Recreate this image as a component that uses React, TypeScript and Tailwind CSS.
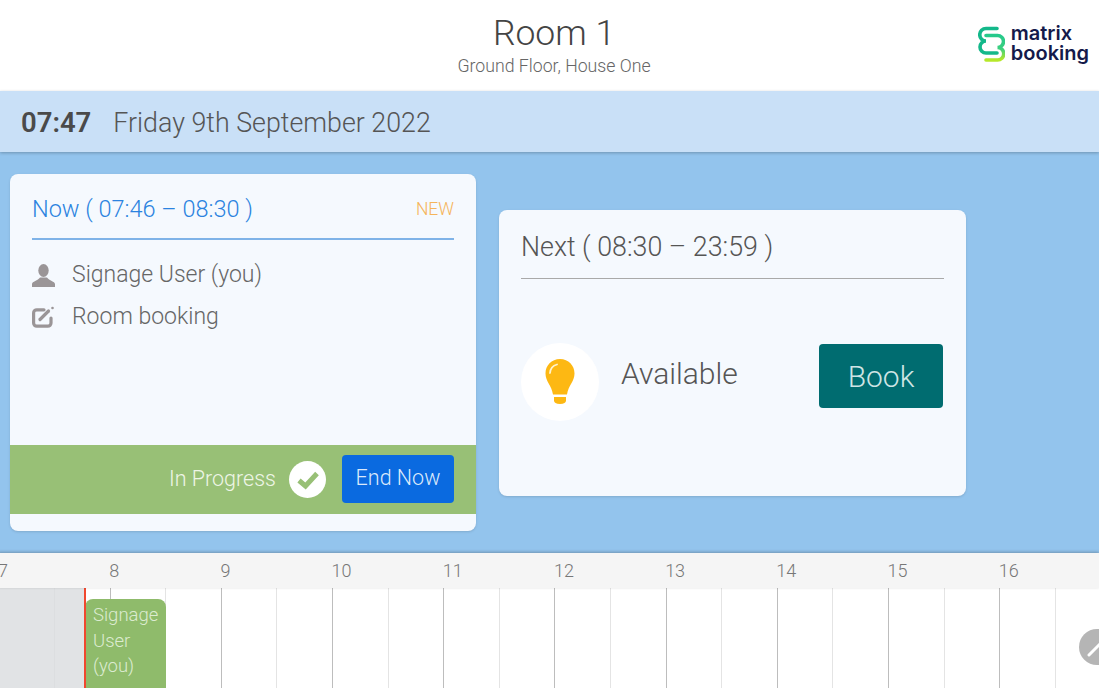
const hours = [7, 8, 9, 10, 11, 12, 13, 14, 15, 16];
const cells = Array.from({ length: 20 }, (_, i) => i);

function Logo() {
  return (
    <div className="flex items-center gap-[6px] pb-[2px]">
      <svg width="27" height="37" viewBox="0 0 27 37" fill="none" strokeWidth="3.6" strokeLinecap="round">
        <defs>
          <linearGradient id="logoRight" gradientUnits="userSpaceOnUse" x1="0" y1="9" x2="0" y2="34">
            <stop offset="0" stopColor="#25c98c" />
            <stop offset="0.55" stopColor="#3bd07f" />
            <stop offset="1" stopColor="#b6e82a" />
          </linearGradient>
        </defs>
        <path d="M8 9.500H19.500a6 6 0 0 1 0 12 6.250 6.250 0 0 1 0 12.500H8" stroke="url(#logoRight)" />
        <path d="M19 2.500H8a6.250 6.250 0 0 0 0 12.500 6 6 0 0 0 0 12H19" stroke="#13b88a" />
      </svg>
      <div className="-mt-[3px] font-['Inter',sans-serif] text-[20px] font-semibold leading-[20px] text-[#141a4a]">
        <div>matrix</div>
        <div>booking</div>
      </div>
    </div>
  );
}

function Bulb() {
  return (
    <svg width="32" height="48" viewBox="0 0 32 48">
      <path
        d="M16 1C7.500 1 1.500 7.500 1.500 15.500c0 8 6 11.500 7.500 21h14c1.500-9.500 7.500-13 7.500-21C30.500 7.500 24.500 1 16 1z"
        fill="#fdb813"
      />
      <path d="M10 39h12v3.500c0 2-2 3.500-6 3.500s-6-1.500-6-3.500z" fill="#fdb813" />
      <path d="M6 15c.3-4 3-7.500 7-8.500" stroke="#fff3cf" strokeWidth="1.800" fill="none" strokeLinecap="round" />
    </svg>
  );
}

function PersonIcon() {
  return (
    <svg width="23" height="23" viewBox="0 0 23 23" fill="#9a9597" className="shrink-0">
      <ellipse cx="11.500" cy="6.500" rx="5.200" ry="6.500" />
      <path d="M0 23v-3c0-2.500 6-3.500 8-6.500h7c2 3 8 4 8 6.500v3z" />
    </svg>
  );
}

function NoteIcon() {
  return (
    <svg width="23" height="22" viewBox="0 0 23 22" fill="none" stroke="#9a9597" strokeLinecap="round" className="shrink-0">
      <path d="M19 12v5a3.200 3.200 0 0 1-3.200 3.200H4.800A3.200 3.200 0 0 1 1.600 17V7a3.200 3.200 0 0 1 3.200-3.200H12" strokeWidth="3.200" />
      <path d="M8 13.500 L16.500 5" strokeWidth="3.200" />
      <circle cx="20.500" cy="2" r="1.300" fill="#9a9597" stroke="none" />
    </svg>
  );
}

function CheckIcon() {
  return (
    <svg width="24" height="20" viewBox="0 0 24 20" fill="none" stroke="#98c076" strokeWidth="5">
      <path d="M3 10.500 L9.500 16 L21 3.500" />
    </svg>
  );
}

export default function App() {
  return (
    <div className="relative flex h-[688px] w-[1099px] flex-col overflow-hidden bg-white font-['Roboto',sans-serif] font-light text-[#4a4a4a]">
      <header className="flex h-[91px] shrink-0 items-center justify-between pl-[457px] pr-[10px]">
        <div className="flex w-[194px] flex-col items-center whitespace-nowrap pb-[2px]">
          <div className="text-[35.500px] leading-[40px] text-[#444]">Room 1</div>
          <div className="mt-[3px] text-[17.700px] leading-[20px] text-[#666]">Ground Floor, House One</div>
        </div>
        <Logo />
      </header>

      <div className="z-10 flex h-[61px] shrink-0 items-center bg-[#c9e0f7] pl-[21px] pt-[3px] shadow-[0_1px_3px_rgba(0,0,0,0.25)]">
        <span className="text-[27.500px] font-semibold text-[#4a4a4a]">07:47</span>
        <span className="ml-[22px] text-[26.800px] text-[#555]">Friday 9th September 2022</span>
      </div>

      <main className="flex h-[401px] shrink-0 items-center gap-[23px] bg-[#93c4ed] pl-[10px]">
        <section className="flex h-[357px] w-[466px] flex-col rounded-lg bg-[#f5f9fe] pt-[16px] shadow-sm">
          <div className="mx-[22px] flex h-[50px] items-start justify-between border-b-2 border-[#7fb3e8] pt-[2px]">
            <span className="text-[23.500px] leading-[34px] text-[#2b83e0]">Now ( 07:46 – 08:30 )</span>
            <span className="pt-[7px] text-[17.500px] leading-[20px] text-[#f5b45a]">NEW</span>
          </div>
          <div className="mx-[22px] mt-[18px] flex h-[34px] items-center gap-[17px] text-[23px] text-[#666]">
            <PersonIcon />
            <span>Signage User (you)</span>
          </div>
          <div className="mx-[22px] mt-[8px] flex h-[34px] items-center gap-[17px] text-[23px] text-[#666]">
            <NoteIcon />
            <span>Room booking</span>
          </div>
          <div className="mt-auto mb-[17px] flex h-[69px] items-center justify-end bg-[#98c076] pr-[22px]">
            <span className="text-[21.500px] text-[#eef5e6]">In Progress</span>
            <span className="ml-[13px] flex h-[37px] w-[37px] items-center justify-center rounded-full bg-white">
              <CheckIcon />
            </span>
            <button type="button" className="ml-[16px] mb-[2px] h-[48px] w-[112px] rounded bg-[#0a6ae0] text-[21.500px] font-light text-[#dbe9fb]">
              End Now
            </button>
          </div>
        </section>

        <section className="flex h-[286px] w-[467px] flex-col rounded-lg bg-[#f5f9fe] px-[22px] pt-[18px] shadow-sm">
          <div className="h-[51px] border-b border-[#a9a9a9] text-[26.800px] leading-[38px] text-[#555]">
            Next ( 08:30 – 23:59 )
          </div>
          <div className="mt-[64px] flex items-center">
            <div className="flex h-[78px] w-[78px] items-center justify-center rounded-full bg-white">
              <Bulb />
            </div>
            <span className="ml-[22px] mb-[16px] text-[30px] text-[#555]">Available</span>
            <button type="button" className="ml-auto mr-[1px] -mt-[12px] h-[64px] w-[124px] rounded bg-[#006c70] pt-[2px] text-[30px] font-light text-[#cfe5e5]">
              Book
            </button>
          </div>
        </section>
      </main>

      <div className="z-10 -ml-[2px] flex h-[35px] shrink-0 bg-[#f5f5f5] text-[18px] text-[#777] shadow-[0_-1px_3px_rgba(0,0,0,0.25)]">
        {hours.map((h) => (
          <div key={h} className="w-[111.200px] shrink-0 pt-[6px] leading-[24px]">
            {h}
          </div>
        ))}
      </div>

      <div className="relative -ml-[1.500px] flex flex-1">
        {cells.map((c) => (
          <div
            key={c}
            className={`h-full w-[55.600px] shrink-0 border-l ${c % 2 === 0 ? "border-[#bdbdbd]" : "border-[#e4e4e4]"}`}
          />
        ))}
        <div className="absolute left-0 top-0 bottom-0 w-[86.500px] bg-[#d9dcdf]/80" />
        <div className="absolute left-[86.500px] top-[11px] bottom-0 w-[81px] rounded-t-lg bg-[#8fbb6b] px-[8px] pt-[4px] text-[18.500px] leading-[25.500px] text-[#dcebd0]">
          Signage User (you)
        </div>
        <div className="absolute left-[85.500px] top-[-5px] bottom-0 w-[2px] bg-[#f0482f]" />
        <div className="absolute left-[81.500px] top-[-10px] h-[10px] w-[10px] rounded-full bg-[#ff1a0a]" />
        <svg className="absolute left-[1080.500px] top-[41px]" width="36" height="36" viewBox="0 0 36 36">
          <circle cx="18" cy="18" r="18" fill="#b5b5b5" />
          <path d="M10 26 L21 15" stroke="#fff" strokeWidth="3" strokeLinecap="round" />
        </svg>
      </div>
    </div>
  );
}
